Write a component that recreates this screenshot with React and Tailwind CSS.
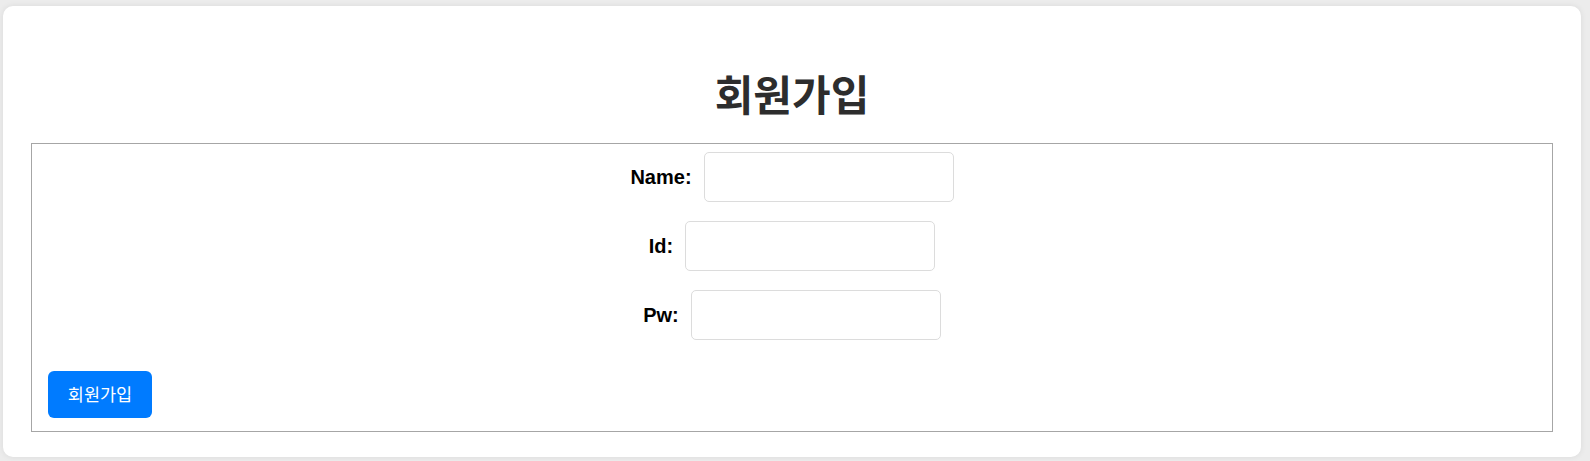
import React from 'react';

const fields = [
  { id: 'name', label: 'Name:' },
  { id: 'id', label: 'Id:' },
  { id: 'pw', label: 'Pw:', type: 'password' },
];

export default function App() {
  return (
    <div className="h-[461px] w-full bg-[#ececec] pl-[3px] pt-[6px] font-['Liberation_Sans','Noto_Sans_CJK_KR',sans-serif]">
      <div className="flex h-[451px] w-[1578px] flex-col rounded-[10px] bg-white px-[28px] pt-[63px] shadow-[0_0_6px_rgba(0,0,0,0.08)]">
        <h1 className="mb-[26px] text-center font-['Noto_Sans_CJK_KR',sans-serif] text-[42px] font-bold leading-[48px] text-[#2d2d2d]">
          회원가입
        </h1>

        {/* form box */}
        <form className="flex h-[289px] flex-col border border-[#a6a6a6] pt-[8px]">
          <div className="flex flex-col items-center gap-[19px]">
            {fields.map(f => (
              <div key={f.id} className="flex items-center gap-[12px]">
                <label htmlFor={f.id} className="text-[20px] font-bold text-black">{f.label}</label>
                <input id={f.id} type={f.type || 'text'}
                  className="h-[50px] w-[250px] rounded-[5px] border border-[#dcdcdc] bg-white px-3 outline-none" />
              </div>
            ))}
          </div>
          <button type="button"
            className="ml-[16px] mt-[31px] h-[47px] w-[104px] self-start rounded-[6px] bg-[#007bff] font-['Noto_Sans_CJK_KR',sans-serif] text-[17.5px] text-white">
            회원가입
          </button>
        </form>
      </div>
    </div>
  );
}
